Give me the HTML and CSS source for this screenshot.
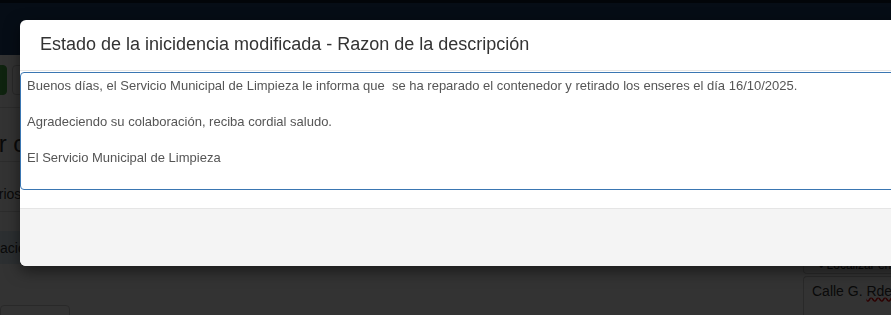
FILE: index.html
```html
<!DOCTYPE html>
<html lang="es">
<head>
    <meta charset="UTF-8">
    <meta name="viewport" content="width=device-width, initial-scale=1.0">
    <title>Incidencias</title>
    <link rel="stylesheet" href="styles.css">
</head>
<body>
    <div class="navbar"></div>

    <div class="page">
        <div class="panel">
            <div class="toolbar">
                <span class="btn btn-success">Nuevo</span>
                <span class="btn btn-default">Filtrar</span>
            </div>
            <h2 class="titulo">Buscar cliente</h2>
            <div class="fila">Comentarios</div>
            <div class="fila activa">Ubicación</div>
            <div class="filtro"></div>
        </div>

        <div class="lateral">
            <div class="caja-top"><span class="pin">&#9679;</span> Localizar en el mapa</div>
            <div class="caja">Calle G. <span class="error">Rdez</span></div>
        </div>
    </div>

    <div class="backdrop"></div>

    <div class="modal">
        <div class="modal-header">
            <h4 class="modal-title">Estado de la inicidencia modificada - Razon de la descripción</h4>
        </div>
        <div class="modal-body">
            <textarea class="razon" spellcheck="false">Buenos días, el Servicio Municipal de Limpieza le informa que  se ha reparado el contenedor y retirado los enseres el día 16/10/2025.

Agradeciendo su colaboración, reciba cordial saludo.

El Servicio Municipal de Limpieza</textarea>
        </div>
        <div class="modal-footer"></div>
    </div>
</body>
</html>
```

FILE: styles.css
```css
body {
    margin: 0;
    font-family: "Liberation Sans", Arial, Helvetica, sans-serif;
    background: #fff;
    color: #333;
    overflow: hidden;
    height: 315px;
}

.navbar {
    height: 52px;
    background: #1f4270;
    border-top: 3px solid #0a1a30;
}

.page {
    display: flex;
    justify-content: space-between;
}

.panel {
    margin-left: -68px;
    width: 400px;
}

.toolbar {
    display: flex;
    gap: 5px;
    padding: 10px 0 12px;
    border-bottom: 1px solid #ddd;
}
.btn {
    display: inline-block;
    box-sizing: border-box;
    height: 30px;
    padding: 6px 12px;
    font-size: 14px;
    border-radius: 4px;
    border: 1px solid #ccc;
}
.btn-success {
    width: 75px;
    background: #4cae4c;
    border-color: #4cae4c;
    color: #fff;
}
.btn-default {
    padding-left: 14px;
    background: #fff;
}

.titulo {
    font-size: 24px;
    font-weight: normal;
    line-height: 28px;
    margin: 0;
    padding: 22px 0 3px;
    border-bottom: 1px solid #ddd;
}

.fila {
    font-size: 14px;
    line-height: 16px;
    padding: 24px 0 9px 10px;
    border-bottom: 1px solid #ddd;
    white-space: nowrap;
}
.fila.activa {
    margin-top: 19px;
    padding: 9px 0 8px 40px;
    background: #dceaf5;
    border-bottom: none;
}

.filtro {
    margin: 41px 0 0 68px;
    width: 68px;
    height: 20px;
    border: 1px solid #ccc;
    border-radius: 4px;
}

.lateral {
    width: 88px;
    margin-top: 195px;
}
.caja-top {
    height: 15px;
    border: 1px solid #ccc;
    border-right: none;
    border-radius: 4px 0 0 4px;
    font-size: 12px;
    line-height: 14px;
    padding: 7px 0 0 15px;
    white-space: nowrap;
    overflow: hidden;
}
.pin {
    font-size: 7px;
    vertical-align: middle;
}
.caja {
    margin-top: 2px;
    height: 60px;
    border: 1px solid #ccc;
    border-right: none;
    border-radius: 4px 0 0 4px;
    padding: 6px 0 0 8px;
    font-size: 14px;
    white-space: nowrap;
}
.error {
    text-decoration: underline wavy #d00;
}

.backdrop {
    position: fixed;
    inset: 0;
    background: rgba(0, 0, 0, 0.8);
}

.modal {
    position: absolute;
    top: 20px;
    left: 20px;
    width: 900px;
    background: #fff;
    border-radius: 6px;
    box-shadow: 0 5px 15px rgba(0, 0, 0, 0.5);
    overflow: hidden;
}

.modal-header {
    padding: 14px 20px 16px;
    border-bottom: 1px solid #e5e5e5;
}
.modal-title {
    margin: 0;
    font-size: 18px;
    font-weight: normal;
    line-height: 20px;
    color: #333;
}

.modal-body {
    padding: 1px 0 18px;
}
.razon {
    display: block;
    box-sizing: border-box;
    width: 100%;
    height: 118px;
    margin: 0;
    padding: 4px 6px;
    font-family: "Liberation Sans", Arial, Helvetica, sans-serif;
    font-size: 13px;
    line-height: 18px;
    color: #555;
    border: 1px solid #3a76b2;
    border-radius: 4px;
    outline: none;
    resize: none;
}

.modal-footer {
    height: 57px;
    background: #f4f4f4;
    border-top: 1px solid #e5e5e5;
}
```
